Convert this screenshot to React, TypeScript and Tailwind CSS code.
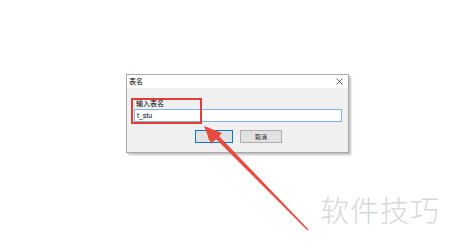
import React from "react";

export default function App() {
  const font = { fontFamily: '"Microsoft YaHei", "Noto Sans CJK SC", "Noto Sans", sans-serif' };
  return (
    <div className="relative w-[450px] h-[247px] bg-white overflow-hidden" style={font}>
      <div className="pt-[74px] pl-[126px]">
        <div className="w-[223px] border border-[#a8a8a8] shadow-[2px_2px_2px_rgba(0,0,0,0.25)]">
          <div className="h-[13px] bg-white flex items-center justify-between pl-[2px] pr-[4px]">
            <span className="text-[7px] leading-none text-black">表名</span>
            <svg width="7" height="7" viewBox="0 0 7 7" className="mr-[1px]">
              <path d="M0.5 0.5 L6.5 6.5 M6.5 0.5 L0.5 6.5" stroke="#333" strokeWidth="0.8" />
            </svg>
          </div>
          <div className="bg-[#f0f0f0] h-[64px] flex flex-col pl-[7px] pr-[6px]">
            <div className="mt-[11px] pl-[2px] text-[7px] leading-[8px] text-black">输入表名</div>
            <div className="mt-[2px] h-[13px] w-[208px] bg-white border border-[#7eb4ea] flex items-center pl-[2px]">
              <span className="text-[7px] leading-none text-black" style={{ fontFamily: '"Liberation Sans", Arial, sans-serif' }}>t_stu</span>
            </div>
            <div className="mt-[8px] flex gap-[7px] pl-[61px]">
              <div className="w-[38px] h-[13px] bg-[#e1e1e1] border border-[#0078d7] flex items-center justify-center text-[6px] leading-none text-[#222]">确定</div>
              <div className="w-[42px] h-[13px] bg-[#e1e1e1] border border-[#adadad] flex items-center justify-center text-[6px] leading-none text-[#222]">取消</div>
            </div>
          </div>
        </div>
      </div>

      <div className="absolute left-[131px] top-[98px] w-[71px] h-[26px] border-2 border-[#e53a3a]" />

      <svg className="absolute left-0 top-0" width="450" height="247" viewBox="0 0 450 247">
        <polygon points="308.5,229.5 307.5,230.5 214,137 217,134" fill="#e84a3f" />
        <polygon points="204,126 222,133 211,144" fill="#e84a3f" />
      </svg>

      <div
        className="absolute left-[320px] top-[191px] text-[29px] leading-[36px] tracking-[1px] text-[#d8d8d8]"
        style={{ fontFamily: '"Noto Sans CJK SC", sans-serif', fontWeight: 300 }}
      >
        软件技巧
      </div>
    </div>
  );
}
